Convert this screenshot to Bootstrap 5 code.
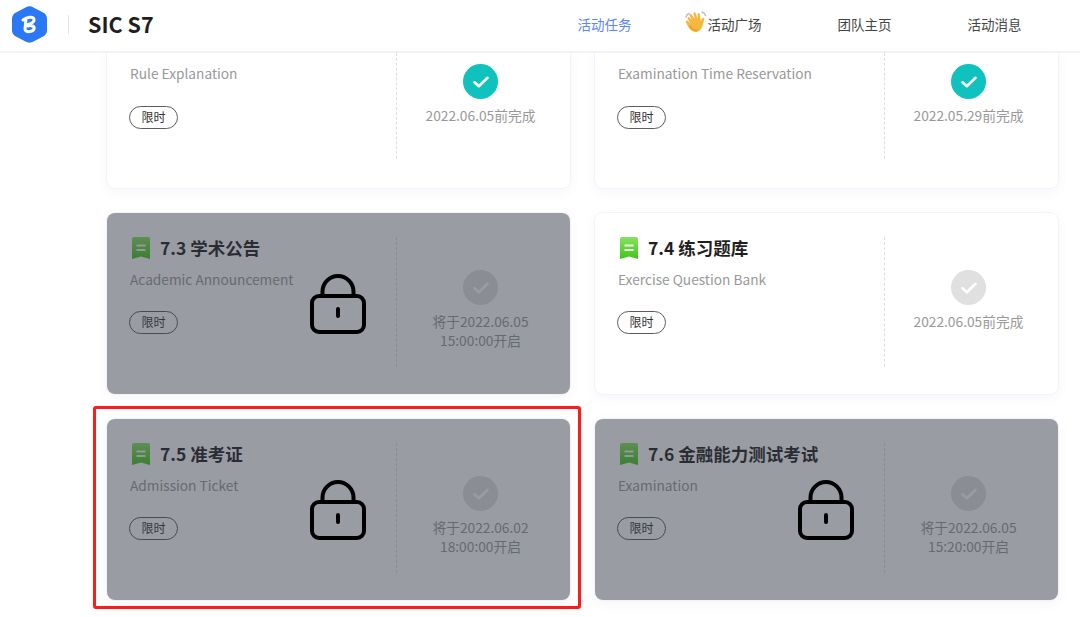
<!DOCTYPE html>
<html lang="zh">
<head>
    <meta charset="UTF-8">
    <title>SIC S7</title>
    <link href="https://cdn.jsdelivr.net/npm/bootstrap@5.3.0/dist/css/bootstrap.min.css" rel="stylesheet">
    <style>
        html, body {
            height: 617px;
            overflow: hidden;
        }
        body {
            background-color: #fff;
            font-family: "Noto Sans CJK SC", "Noto Sans", sans-serif;
        }
        .top-bar {
            height: 53px;
            border-bottom: 2px solid #f3f4f6;
            padding-left: 11px;
            padding-bottom: 2px;
        }
        .brand-rule {
            width: 1px;
            height: 19px;
            background: #e4e4e4;
            margin: 0 19px 0 20px;
        }
        .brand-name {
            font-size: 21.5px;
            font-weight: 700;
            color: #1f1f1f;
        }
        .top-link {
            position: relative;
            font-size: 13.5px;
            color: #444;
            text-decoration: none;
        }
        .top-link.active-link { color: #5b86ff; }
        .link-1 { margin-left: 424px; }
        .link-2 { margin-left: 76px; }
        .link-3 { margin-left: 76px; }
        .link-4 { margin-left: 76px; }
        .wave {
            position: absolute;
            left: -23px;
            top: -3px;
        }
        .task-grid {
            display: grid;
            grid-template-columns: 463px 463px;
            column-gap: 25px;
            row-gap: 25px;
            padding-left: 107px;
        }
        .task-card {
            position: relative;
            height: 181px;
            background: #fff;
            border-radius: 8px;
            box-shadow: 0 0 0 1px #f2f3f8, 0 3px 12px rgba(90, 100, 160, .07);
            padding: 24px 0 0 23px;
            display: flex;
        }
        .task-card.cut-off {
            height: 135px;
            padding-top: 0;
            border-radius: 0 0 8px 8px;
        }
        .task-info {
            width: 266px;
            flex: none;
        }
        .task-title {
            display: flex;
            align-items: center;
            gap: 10px;
            height: 22px;
            padding-bottom: 2px;
            font-size: 17.5px;
            font-weight: 700;
            color: #1f1f1f;
            margin: 0 0 10px;
        }
        .book-mark {
            margin: 2px 0 0 2px;
            flex: none;
        }
        .task-sub {
            font-size: 13.7px;
            color: #999;
            line-height: 20px;
            margin: 0;
        }
        .cut-off .task-sub { padding-top: 10px; }
        .time-tag {
            display: inline-block;
            margin: 22px 0 0 -1px;
            width: 49px;
            height: 23px;
            line-height: 20px;
            text-align: center;
            font-size: 12px;
            color: #333;
            border: 1px solid #5c5c5c;
            border-radius: 12px;
        }
        .cut-off .time-tag { margin-top: 23px; }
        .task-state {
            width: 169px;
            height: 130px;
            border-left: 1px dashed #ddd;
            flex: none;
            text-align: center;
            font-size: 13.75px;
            line-height: 19px;
            color: #999;
            padding: 33px 1px 0 0;
        }
        .cut-off .task-state {
            height: 106px;
            padding-top: 11px;
        }
        .state-dot {
            width: 35px;
            height: 35px;
            border-radius: 50%;
            background: #e0e0e0;
            margin: 0 auto 7px;
            display: flex;
            align-items: center;
            justify-content: center;
        }
        .state-dot.done { background: #10c2bd; }
        .lock-layer {
            position: absolute;
            inset: 0;
            background: rgba(53, 57, 71, .5);
            border-radius: 8px;
        }
        .lock-icon {
            position: absolute;
            left: 203px;
            top: 61px;
        }
        .red-frame {
            position: absolute;
            left: -14px;
            top: -13px;
            width: 488px;
            height: 203px;
            border: 3px solid #fb1c1c;
            border-radius: 3px;
        }
    </style>
</head>
<body>

    <svg width="0" height="0" class="d-block">
        <defs>
            <linearGradient id="bookFill" x1="0" y1="0" x2="0" y2="1">
                <stop offset="0" stop-color="#86e35f"/>
                <stop offset="1" stop-color="#3fc51a"/>
            </linearGradient>
            <symbol id="book" viewBox="0 0 18 22">
                <path d="M2 0h14a2 2 0 0 1 2 2v20l-9-2.500L0 22V2a2 2 0 0 1 2-2z" fill="url(#bookFill)"/>
                <rect x="4.500" y="7.500" width="9" height="2" fill="#fff" opacity=".9"/>
                <rect x="4.500" y="12" width="9" height="2" fill="#fff" opacity=".9"/>
            </symbol>
            <symbol id="tick" viewBox="0 0 16 12">
                <path d="M1.500 6.200l4.300 4L14.500 1.800" fill="none" stroke="#fff" stroke-width="2.600" stroke-linecap="round" stroke-linejoin="round"/>
            </symbol>
            <symbol id="lock" viewBox="0 0 56 60">
                <rect x="2" y="22" width="52" height="36" rx="7" fill="none" stroke="#000" stroke-width="4"/>
                <path d="M12.500 22v-4.500a15.500 15.500 0 0 1 31 0V22" fill="none" stroke="#000" stroke-width="4"/>
                <path d="M28 35v7" fill="none" stroke="#000" stroke-width="4" stroke-linecap="round"/>
            </symbol>
        </defs>
    </svg>

    <header class="top-bar d-flex align-items-center bg-white">
        <svg width="37" height="37" viewBox="0 0 37 37">
            <path d="M14.500 1.500a8 8 0 0 1 8 0l9.500 5a7 7 0 0 1 4 6v12a7 7 0 0 1-4 6l-9.500 5a8 8 0 0 1-8 0l-9.500-5a7 7 0 0 1-4-6v-12a7 7 0 0 1 4-6z" fill="#2a78f5"/>
            <path d="M12 14c4-3 10-4 11-1 1 3-4 5-7 6M15 13l-1 10c0 4 8 3 9 0 1-3-3-4-6-3" fill="none" stroke="#fff" stroke-width="3" stroke-linecap="round"/>
        </svg>
        <span class="brand-rule"></span>
        <span class="brand-name">SIC S7</span>
        <a class="top-link active-link link-1" href="#">活动任务</a>
        <a class="top-link link-2" href="#">
            <svg class="wave" width="22" height="22" viewBox="0 0 22 22">
                <path d="M1 6c.5-2 1.500-3 3-3.500M17 1c2 .5 3 1.500 3.500 3.500" fill="none" stroke="#bdbdbd" stroke-width="1.500" stroke-linecap="round"/>
                <path d="M7 9L4.500 4.500c-.8-1.500 1.200-2.500 2-1L10 8 8.500 3c-.5-1.700 1.700-2.300 2.200-.7l2 6L12.500 3.500c0-1.700 2.200-1.700 2.400 0l.8 6.500 1.500-2.500c.9-1.400 2.700-.4 2 1l-1.500 5.500c-1 4.500-4 7-7.500 7-3 0-5-2-6.700-4.700L1 11.500c-.9-1.400.9-2.600 2-1.500l2.500 2.500L2.800 8c-.9-1.500 1-2.600 2-1.300z" fill="#f5b83d"/>
                <path d="M5 15c1.500 3 4 4.500 7 4.300" fill="none" stroke="#e09a24" stroke-width="1.200" stroke-linecap="round"/>
            </svg>
            活动广场
        </a>
        <a class="top-link link-3" href="#">团队主页</a>
        <a class="top-link link-4" href="#">活动消息</a>
    </header>

    <main class="task-grid">
        <div class="task-card cut-off">
            <div class="task-info">
                <p class="task-sub">Rule Explanation</p>
                <span class="time-tag">限时</span>
            </div>
            <div class="task-state">
                <div class="state-dot done"><svg width="16" height="12"><use href="#tick"/></svg></div>
                2022.06.05前完成
            </div>
        </div>
        <div class="task-card cut-off">
            <div class="task-info">
                <p class="task-sub">Examination Time Reservation</p>
                <span class="time-tag">限时</span>
            </div>
            <div class="task-state">
                <div class="state-dot done"><svg width="16" height="12"><use href="#tick"/></svg></div>
                2022.05.29前完成
            </div>
        </div>

        <div class="task-card">
            <div class="task-info">
                <h5 class="task-title"><svg class="book-mark" width="18" height="22"><use href="#book"/></svg>7.3 学术公告</h5>
                <p class="task-sub">Academic Announcement</p>
                <span class="time-tag">限时</span>
            </div>
            <div class="task-state">
                <div class="state-dot"><svg width="16" height="12"><use href="#tick"/></svg></div>
                将于2022.06.05<br>15:00:00开启
            </div>
            <div class="lock-layer"><svg class="lock-icon" width="56" height="60"><use href="#lock"/></svg></div>
        </div>
        <div class="task-card">
            <div class="task-info">
                <h5 class="task-title"><svg class="book-mark" width="18" height="22"><use href="#book"/></svg>7.4 练习题库</h5>
                <p class="task-sub">Exercise Question Bank</p>
                <span class="time-tag">限时</span>
            </div>
            <div class="task-state">
                <div class="state-dot"><svg width="16" height="12"><use href="#tick"/></svg></div>
                2022.06.05前完成
            </div>
        </div>

        <div class="task-card">
            <div class="task-info">
                <h5 class="task-title"><svg class="book-mark" width="18" height="22"><use href="#book"/></svg>7.5 准考证</h5>
                <p class="task-sub">Admission Ticket</p>
                <span class="time-tag">限时</span>
            </div>
            <div class="task-state">
                <div class="state-dot"><svg width="16" height="12"><use href="#tick"/></svg></div>
                将于2022.06.02<br>18:00:00开启
            </div>
            <div class="lock-layer"><svg class="lock-icon" width="56" height="60"><use href="#lock"/></svg></div>
            <div class="red-frame"></div>
        </div>
        <div class="task-card">
            <div class="task-info">
                <h5 class="task-title"><svg class="book-mark" width="18" height="22"><use href="#book"/></svg>7.6 金融能力测试考试</h5>
                <p class="task-sub">Examination</p>
                <span class="time-tag">限时</span>
            </div>
            <div class="task-state">
                <div class="state-dot"><svg width="16" height="12"><use href="#tick"/></svg></div>
                将于2022.06.05<br>15:20:00开启
            </div>
            <div class="lock-layer"><svg class="lock-icon" width="56" height="60"><use href="#lock"/></svg></div>
        </div>
    </main>

    <script src="https://cdn.jsdelivr.net/npm/bootstrap@5.3.0/dist/js/bootstrap.bundle.min.js"></script>
</body>
</html>
